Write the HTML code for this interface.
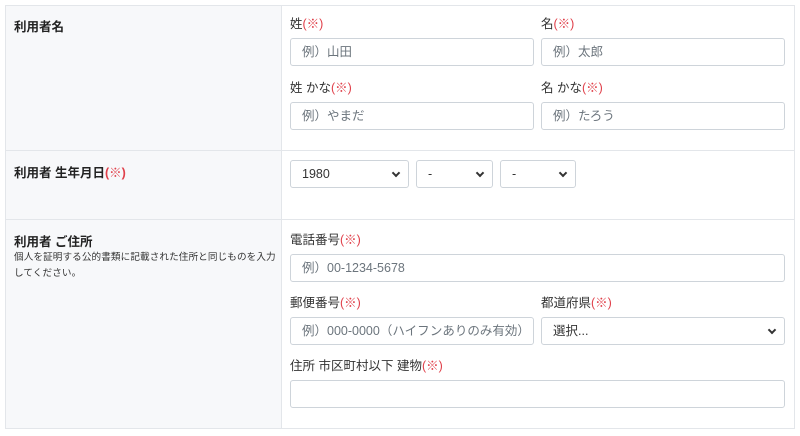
<!DOCTYPE html><html><head><meta charset="utf-8"><style>
body{margin:0;width:800px;height:436px;background:#fff;font-family:"Liberation Sans","Noto Sans CJK JP",sans-serif;color:#212529;position:relative;overflow:hidden}
.a{position:absolute}
.lbl{position:absolute;font-size:12.5px;line-height:16px;color:#333}
.req{color:#e0404a}
.in{position:absolute;height:28px;border:1px solid #ced4da;border-radius:3px;box-sizing:border-box;background:#fff;font-size:12.5px;line-height:26px;padding-left:11px;color:#6c757d}
.sel{color:#333}
.sel::after{content:"";position:absolute;right:9px;top:9px;width:4px;height:4px;border-right:2px solid #333;border-bottom:2px solid #333;transform:rotate(45deg)}
.h{position:absolute;left:14px;font-size:12.5px;font-weight:bold;color:#222}
</style></head><body>
<div class="a" style="left:5px;top:5px;width:790px;height:424px;border:1px solid #e3e6ea;box-sizing:border-box"></div>
<div class="a" style="left:6px;top:6px;width:275px;height:422px;background:#f7f8fa;border-right:1px solid #e3e6ea"></div>
<div class="a" style="left:6px;top:150px;width:788px;height:1px;background:#e3e6ea"></div>
<div class="a" style="left:6px;top:219px;width:788px;height:1px;background:#e3e6ea"></div>

<div class="h" style="top:16px">利用者名</div>
<div class="h" style="top:162px">利用者 生年月日<span class="req">(※)</span></div>
<div class="h" style="top:231px">利用者 ご住所</div>
<div class="a" style="left:14px;top:250px;font-size:9.6px;line-height:16px;color:#333;letter-spacing:0.1px">個人を証明する公的書類に記載された住所と同じものを入力<br>してください。</div>

<div class="lbl" style="left:290px;top:16px">姓<span class="req">(※)</span></div>
<div class="lbl" style="left:541px;top:16px">名<span class="req">(※)</span></div>
<div class="in" style="left:290px;top:38px;width:244px">例）山田</div>
<div class="in" style="left:541px;top:38px;width:244px">例）太郎</div>
<div class="lbl" style="left:290px;top:80px">姓 かな<span class="req">(※)</span></div>
<div class="lbl" style="left:541px;top:80px">名 かな<span class="req">(※)</span></div>
<div class="in" style="left:290px;top:102px;width:244px">例）やまだ</div>
<div class="in" style="left:541px;top:102px;width:244px">例）たろう</div>

<div class="in sel" style="left:290px;top:160px;width:119px">1980</div>
<div class="in sel" style="left:416px;top:160px;width:77px">-</div>
<div class="in sel" style="left:500px;top:160px;width:76px">-</div>

<div class="lbl" style="left:290px;top:232px">電話番号<span class="req">(※)</span></div>
<div class="in" style="left:290px;top:254px;width:495px">例）00-1234-5678</div>
<div class="lbl" style="left:290px;top:295px">郵便番号<span class="req">(※)</span></div>
<div class="lbl" style="left:541px;top:295px">都道府県<span class="req">(※)</span></div>
<div class="in" style="left:290px;top:317px;width:244px">例）000-0000（ハイフンありのみ有効）</div>
<div class="in sel" style="left:541px;top:317px;width:244px">選択...</div>
<div class="lbl" style="left:290px;top:358px">住所 市区町村以下 建物<span class="req">(※)</span></div>
<div class="in" style="left:290px;top:380px;width:495px"></div>
</body></html>
